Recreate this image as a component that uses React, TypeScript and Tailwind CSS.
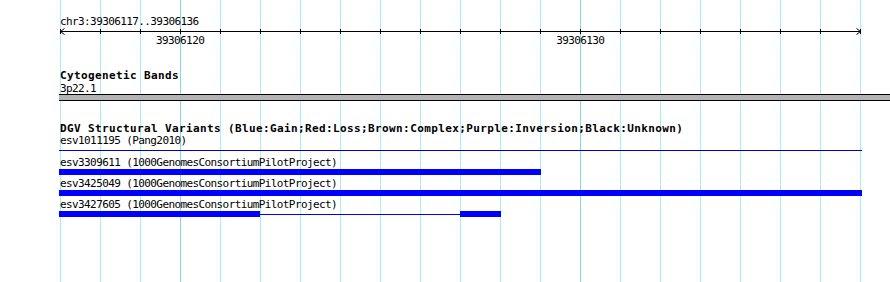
import React from 'react';

// Track panel: 40px per base, 39306117..39306136 drawn from x=60 to x=860
const gridXs = Array.from({ length: 21 }, (_, i) => 60 + i * 40);
const majorXs = [180, 580];

const GridLines: React.FC = () => (
  <svg
    className="absolute inset-0 pointer-events-none"
    width={890}
    height={282}
    shapeRendering="crispEdges"
  >
    {gridXs.map((x) => (
      <line
        key={x}
        x1={x + 0.5}
        x2={x + 0.5}
        y1={0}
        y2={282}
        stroke={majorXs.includes(x) ? '#86d6ee' : '#a8eef4'}
        strokeWidth={1}
      />
    ))}
  </svg>
);

const Axis: React.FC = () => (
  <svg width={890} height={7} className="block" shapeRendering="crispEdges">
    <line x1={60} x2={861} y1={3.5} y2={3.5} stroke="#000" />
    {gridXs.map((x) => (
      <line key={x} x1={x + 0.5} x2={x + 0.5} y1={1} y2={6} stroke="#000" />
    ))}
    <polyline points="64.5,0.5 60.5,3.5 64.5,6.5" fill="none" stroke="#000" shapeRendering="auto" />
    <polyline points="856.5,0.5 860.5,3.5 856.5,6.5" fill="none" stroke="#000" shapeRendering="auto" />
  </svg>
);

const mono = "font-['DejaVu_Sans_Mono',monospace]";

const Label: React.FC<{ children: React.ReactNode; className?: string }> = ({ children, className = '' }) => (
  <div className={`${mono} text-[11px] tracking-[-0.6px] whitespace-nowrap text-black ${className}`}>
    {children}
  </div>
);

const Title: React.FC<{ children: React.ReactNode; className?: string }> = ({ children, className = '' }) => (
  <div className={`${mono} font-bold text-[11px] tracking-[0.38px] whitespace-nowrap text-black ${className}`}>
    {children}
  </div>
);

export default function App() {
  return (
    <div className="relative w-[890px] h-[282px] bg-white overflow-hidden">
      <GridLines />
      <div className="relative flex flex-col">
        {/* ruler */}
        <Label className="mt-[16px] pl-[60px] h-[12px] leading-[12px]">chr3:39306117..39306136</Label>
        <Axis />
        <div className="flex pl-[156px]">
          <Label className="h-[12px] leading-[12px]">39306120</Label>
          <Label className="ml-[352px] h-[12px] leading-[12px]">39306130</Label>
        </div>

        {/* cytogenetic bands */}
        <Title className="mt-[23px] pl-[60px] h-[13px] leading-[11px]">Cytogenetic Bands</Title>
        <Label className="pl-[60px] h-[11px] leading-[11px]">3p22.1</Label>
        <div className="ml-[59px] h-[7px] border-y border-black bg-[#b4b4b4]" />

        {/* DGV */}
        <Title className="mt-[22px] pl-[60px] h-[12px] leading-[12px]">
          DGV Structural Variants (Blue:Gain;Red:Loss;Brown:Complex;Purple:Inversion;Black:Unknown)
        </Title>
        <Label className="pl-[60px] h-[12px] leading-[12px]">esv1011195 (Pang2010)</Label>
        <div className="mt-[3px] ml-[59px] w-[803px] h-[1px] bg-[#0000cc]" />

        <Label className="mt-[6px] pl-[60px] h-[12px] leading-[12px]">esv3309611 (1000GenomesConsortiumPilotProject)</Label>
        <div className="ml-[59px] w-[482px] h-[6px] bg-[#0000ff]" />

        <Label className="mt-[3px] pl-[60px] h-[12px] leading-[12px]">esv3425049 (1000GenomesConsortiumPilotProject)</Label>
        <div className="ml-[59px] w-[803px] h-[6px] bg-[#0000ff]" />

        <Label className="mt-[3px] pl-[60px] h-[12px] leading-[12px]">esv3427605 (1000GenomesConsortiumPilotProject)</Label>
        <div className="ml-[59px] flex items-center h-[6px]">
          <div className="w-[201px] h-[6px] bg-[#0000ff]" />
          <div className="w-[200px] h-[1px] bg-[#0000ff]" />
          <div className="w-[41px] h-[6px] bg-[#0000ff]" />
        </div>
      </div>
    </div>
  );
}
